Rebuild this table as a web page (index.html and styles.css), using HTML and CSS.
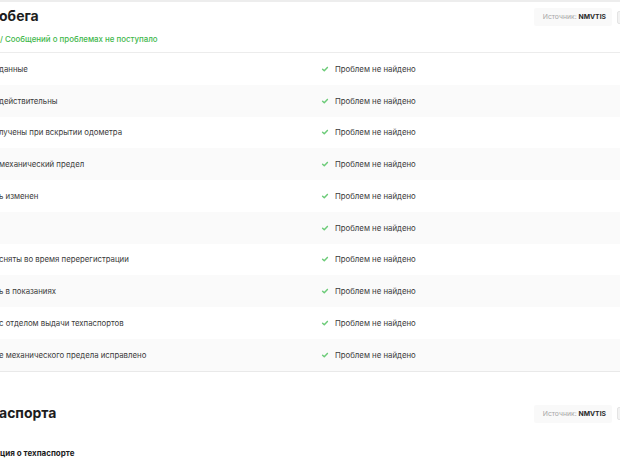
FILE: index.html
```html
<!DOCTYPE html>
<html lang="ru">
<head>
<meta charset="utf-8">
<link rel="stylesheet" href="styles.css">
</head>
<body>
<div class="page">
  <section class="card">
    <header class="head">
      <div class="head-text">
        <h2 class="title">обега</h2>
        <p class="status">/ Сообщений о проблемах не поступало</p>
      </div>
      <div class="head-side">
        <span class="source"><span class="source-label">Источник:</span> <b>NMVTIS</b></span>
        <span class="toggle"></span>
      </div>
    </header>
    <div class="rows">
      <div class="row"><span class="name">данные</span><span class="result"><svg class="check" viewBox="0 0 10 10"><path d="M2 5.2 L4.1 7.2 L8 3" /></svg>Проблем не найдено</span></div>
      <div class="row"><span class="name">действительны</span><span class="result"><svg class="check" viewBox="0 0 10 10"><path d="M2 5.2 L4.1 7.2 L8 3" /></svg>Проблем не найдено</span></div>
      <div class="row"><span class="name">лучены при вскрытии одометра</span><span class="result"><svg class="check" viewBox="0 0 10 10"><path d="M2 5.2 L4.1 7.2 L8 3" /></svg>Проблем не найдено</span></div>
      <div class="row"><span class="name">механический предел</span><span class="result"><svg class="check" viewBox="0 0 10 10"><path d="M2 5.2 L4.1 7.2 L8 3" /></svg>Проблем не найдено</span></div>
      <div class="row"><span class="name">ь изменен</span><span class="result"><svg class="check" viewBox="0 0 10 10"><path d="M2 5.2 L4.1 7.2 L8 3" /></svg>Проблем не найдено</span></div>
      <div class="row"><span class="name"></span><span class="result"><svg class="check" viewBox="0 0 10 10"><path d="M2 5.2 L4.1 7.2 L8 3" /></svg>Проблем не найдено</span></div>
      <div class="row"><span class="name">сняты во время перерегистрации</span><span class="result"><svg class="check" viewBox="0 0 10 10"><path d="M2 5.2 L4.1 7.2 L8 3" /></svg>Проблем не найдено</span></div>
      <div class="row"><span class="name">ь в показаниях</span><span class="result"><svg class="check" viewBox="0 0 10 10"><path d="M2 5.2 L4.1 7.2 L8 3" /></svg>Проблем не найдено</span></div>
      <div class="row"><span class="name">с отделом выдачи техпаспортов</span><span class="result"><svg class="check" viewBox="0 0 10 10"><path d="M2 5.2 L4.1 7.2 L8 3" /></svg>Проблем не найдено</span></div>
      <div class="row"><span class="name">е механического предела исправлено</span><span class="result"><svg class="check" viewBox="0 0 10 10"><path d="M2 5.2 L4.1 7.2 L8 3" /></svg>Проблем не найдено</span></div>
    </div>
  </section>
  <section class="card card-second">
    <header class="head head-plain">
      <div class="head-text">
        <h2 class="title">аспорта</h2>
      </div>
      <div class="head-side">
        <span class="source"><span class="source-label">Источник:</span> <b>NMVTIS</b></span>
        <span class="toggle"></span>
      </div>
    </header>
    <h3 class="subhead">ция о техпаспорте</h3>
  </section>
</div>
</body>
</html>
```

FILE: styles.css
```css
* { box-sizing: border-box; }
html, body {
  margin: 0;
  padding: 0;
  background: #ffffff;
}
body {
  width: 620px;
  height: 460px;
  overflow: hidden;
  font-family: Inter, "Noto Sans", sans-serif;
  color: #2b2b2b;
}
.page {
  display: flex;
  flex-direction: column;
  gap: 9px;
}
.card {
  background: #fff;
  border-top: 2px solid #ededed;
  border-bottom: 1px solid #e9e9e9;
}
.card-second {
  border-top: none;
  border-bottom: none;
}
.head {
  display: flex;
  justify-content: space-between;
  align-items: flex-start;
  height: 51px;
  border-bottom: 1px solid #ececec;
  padding-top: 5px;
}
.head-plain {
  border-bottom: none;
  height: auto;
  padding-top: 23px;
}
.title {
  margin: 0;
  font-size: 14px;
  line-height: 18px;
  font-weight: 700;
  color: #1d1d1d;
  margin-left: -1px;
}
.status {
  margin: 8px 0 0;
  font-size: 7.9px;
  line-height: 12px;
  color: #3fb74c;
  font-weight: 500;
}
.head-side {
  display: flex;
  align-items: center;
  gap: 5px;
  padding-top: 1px;
  margin-right: -9px;
}
.source {
  background: #f9f9f9;
  padding: 4px 6px 4px 9px;
  font-size: 6.8px;
  line-height: 10px;
  border-radius: 2px;
}
.source-label { color: #a6a6a6; }
.source b { color: #2a2a2a; font-weight: 700; }
.toggle {
  width: 12px;
  height: 13px;
  border: 1px solid #e4e4e4;
  background: #f2f2f2;
  border-radius: 2px;
}
.row {
  display: grid;
  grid-template-columns: 321px 1fr;
  align-items: center;
  height: 31.75px;
  font-size: 7.8px;
  color: #3a3a3a;
}
.row:nth-child(even) { background: #fafafa; }
.name { margin-left: -1px; }
.result {
  display: flex;
  align-items: center;
  gap: 6px;
}
.check {
  width: 8px;
  height: 8px;
  fill: none;
  stroke: #6ccb78;
  stroke-width: 1.8;
  stroke-linecap: round;
  stroke-linejoin: round;
}
.subhead {
  margin: 24px 0 0;
  font-size: 8px;
  font-weight: 700;
  color: #1d1d1d;
  line-height: 12px;
}
```
